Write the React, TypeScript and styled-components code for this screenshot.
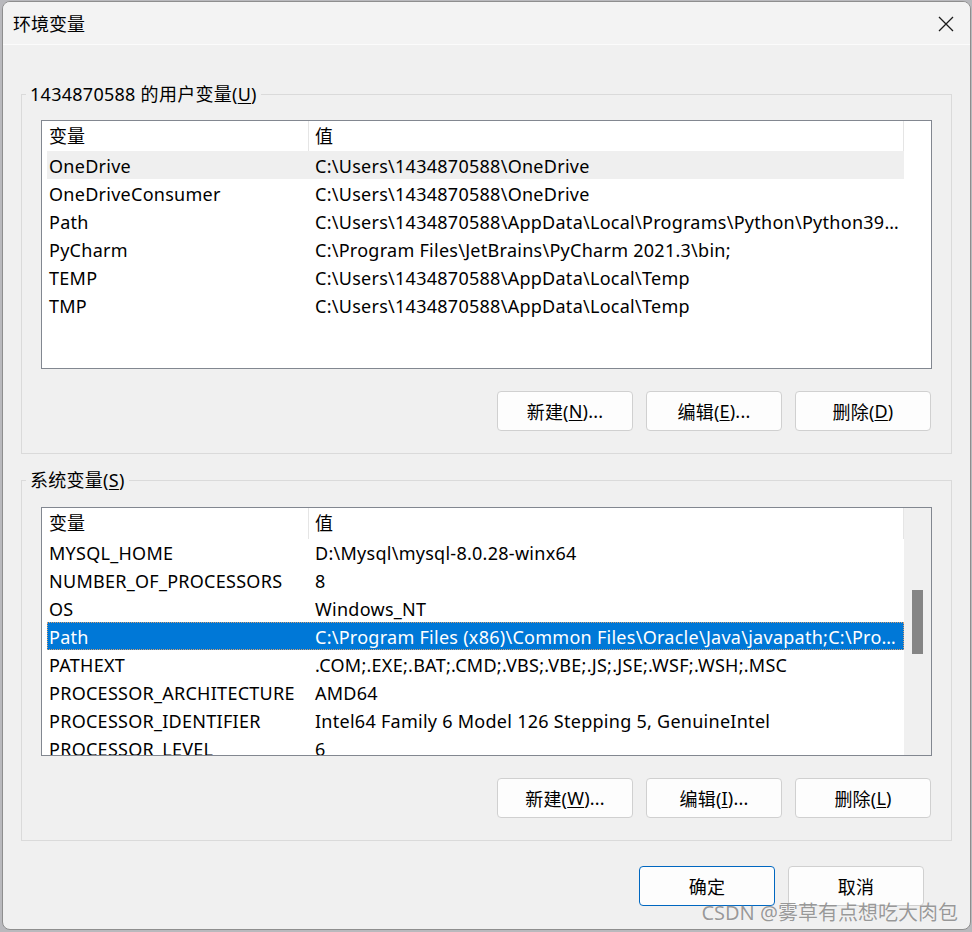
import React from 'react'
import styled, { createGlobalStyle } from 'styled-components'

const GlobalStyle = createGlobalStyle`
  html, body {
    margin: 0;
    padding: 0;
    background: #b9b9bd;
  }
  body {
    padding: 1px 0 0 2px;
    font-family: 'Noto Sans', 'Noto Sans CJK SC', sans-serif;
    color: #000;
  }
`

type Row = { name: string; value: string }

const userVars: Row[] = [
  { name: 'OneDrive', value: 'C:\\Users\\1434870588\\OneDrive' },
  { name: 'OneDriveConsumer', value: 'C:\\Users\\1434870588\\OneDrive' },
  { name: 'Path', value: 'C:\\Users\\1434870588\\AppData\\Local\\Programs\\Python\\Python39\\Scripts\\;C:\\Users' },
  { name: 'PyCharm', value: 'C:\\Program Files\\JetBrains\\PyCharm 2021.3\\bin;' },
  { name: 'TEMP', value: 'C:\\Users\\1434870588\\AppData\\Local\\Temp' },
  { name: 'TMP', value: 'C:\\Users\\1434870588\\AppData\\Local\\Temp' },
]

const sysVars: Row[] = [
  { name: 'MYSQL_HOME', value: 'D:\\Mysql\\mysql-8.0.28-winx64' },
  { name: 'NUMBER_OF_PROCESSORS', value: '8' },
  { name: 'OS', value: 'Windows_NT' },
  { name: 'Path', value: 'C:\\Program Files (x86)\\Common Files\\Oracle\\Java\\javapath;C:\\Program Files' },
  { name: 'PATHEXT', value: '.COM;.EXE;.BAT;.CMD;.VBS;.VBE;.JS;.JSE;.WSF;.WSH;.MSC' },
  { name: 'PROCESSOR_ARCHITECTURE', value: 'AMD64' },
  { name: 'PROCESSOR_IDENTIFIER', value: 'Intel64 Family 6 Model 126 Stepping 5, GenuineIntel' },
  { name: 'PROCESSOR_LEVEL', value: '6' },
]

const VarList = ({
  rows,
  hover,
  selected,
  scroll,
  top,
}: {
  rows: Row[]
  hover?: number
  selected?: number
  scroll?: boolean
  top: number
}) => (
  <ListView $top={top}>
    <Columns>
      <Header>
        <HeadCell $pad={7}>变量</HeadCell>
        <HeadSep />
        <HeadCell $pad={6}>值</HeadCell>
        <HeadSep />
      </Header>
      {rows.map((r, i) => (
        <ItemRow key={r.name + i} $hover={i === hover} $selected={i === selected}>
          <NameCell>{r.name}</NameCell>
          <ValueCell>{r.value}</ValueCell>
        </ItemRow>
      ))}
    </Columns>
    {scroll ? (
      <ScrollTrack>
        <ScrollThumb />
      </ScrollTrack>
    ) : (
      <Filler />
    )}
  </ListView>
)

const App = () => (
  <>
    <GlobalStyle />
    <Dialog>
      <TitleBar>
        <Title>环境变量</Title>
        <CloseButton>
          <svg width="16" height="16" viewBox="0 0 16 16">
            <path d="M1 1 L15 15 M15 1 L1 15" stroke="#1b1b1b" strokeWidth="1.3" fill="none" />
          </svg>
        </CloseButton>
      </TitleBar>
      <Body>
        <GroupBox $top={49}>
          <Caption>
            1434870588 的用户变量(<u>U</u>)
          </Caption>
          <VarList rows={userVars} hover={0} top={13} />
          <ButtonRow>
            <Button>
              新建(<u>N</u>)...
            </Button>
            <Button>
              编辑(<u>E</u>)...
            </Button>
            <Button>
              删除(<u>D</u>)
            </Button>
          </ButtonRow>
        </GroupBox>
        <GroupBox $top={26}>
          <Caption>
            系统变量(<u>S</u>)
          </Caption>
          <VarList rows={sysVars} selected={3} scroll top={14} />
          <ButtonRow>
            <Button>
              新建(<u>W</u>)...
            </Button>
            <Button>
              编辑(<u>I</u>)...
            </Button>
            <Button>
              删除(<u>L</u>)
            </Button>
          </ButtonRow>
        </GroupBox>
        <Footer>
          <Button $primary>确定</Button>
          <Button>取消</Button>
        </Footer>
      </Body>
      <Watermark>CSDN @雾草有点想吃大肉包</Watermark>
    </Dialog>
  </>
)

export default App

const Dialog = styled.div`
  position: relative;
  width: 967px;
  height: 927px;
  border: 1px solid #8e8e8e;
  border-radius: 8px;
  overflow: hidden;
  background: #f0f0f0;
  display: flex;
  flex-direction: column;
`

const TitleBar = styled.div`
  height: 42px;
  flex: 0 0 auto;
  background: #f3f3f3;
  border-bottom: 1px solid #fbfbfb;
  display: flex;
  align-items: center;
  justify-content: space-between;
  padding: 0 16px 0 10px;
`

const Title = styled.div`
  font-size: 18px;
  line-height: 24px;
  padding-top: 2px;
`

const CloseButton = styled.div`
  width: 16px;
  height: 16px;
  display: flex;
  margin-top: 1px;
`

const Body = styled.div`
  flex: 1;
  display: flex;
  flex-direction: column;
  padding-left: 18px;
`

const GroupBox = styled.div<{ $top: number }>`
  margin-top: ${(p) => p.$top}px;
  width: 931px;
  box-sizing: border-box;
  border: 1px solid #dadada;
  padding: 0 19px 22px 19px;
  display: flex;
  flex-direction: column;
`

const Caption = styled.div`
  align-self: flex-start;
  margin: -14px 0 0 -15px;
  padding: 0 4px;
  background: #f0f0f0;
  font-size: 18px;
  line-height: 26px;
  letter-spacing: 0.27px;
  white-space: nowrap;

  u {
    text-underline-offset: 2px;
  }
`

const ListView = styled.div<{ $top: number }>`
  margin-top: ${(p) => p.$top}px;
  height: 249px;
  flex: 0 0 auto;
  box-sizing: border-box;
  border: 1px solid #828790;
  background: #fff;
  display: flex;
  overflow: hidden;
`

const Columns = styled.div`
  width: 862px;
  display: flex;
  flex-direction: column;
`

const Header = styled.div`
  height: 30px;
  flex: 0 0 auto;
  display: grid;
  grid-template-columns: 266px 1px 594px 1px;
`

const HeadCell = styled.div<{ $pad: number }>`
  padding-left: ${(p) => p.$pad}px;
  font-size: 18px;
  line-height: 31px;
`

const HeadSep = styled.div`
  background: #e5e5e5;
`

const ItemRow = styled.div<{ $hover?: boolean; $selected?: boolean }>`
  flex: 0 0 auto;
  height: 28px;
  margin-left: 5px;
  width: 857px;
  box-sizing: border-box;
  display: grid;
  grid-template-columns: 261px 596px;
  font-size: 18px;
  line-height: 30px;
  letter-spacing: 0.27px;
  background: ${(p) => (p.$selected ? '#0078d7' : p.$hover ? '#efefef' : 'transparent')};
  color: ${(p) => (p.$selected ? '#fff' : '#000')};
  outline: ${(p) => (p.$selected ? '1px dotted #d8a070' : 'none')};
  outline-offset: -1px;
`

const NameCell = styled.div`
  padding-left: 2px;
  height: 28px;
  white-space: nowrap;
  overflow: hidden;
`

const ValueCell = styled.div`
  padding: 0 4px 0 7px;
  height: 28px;
  white-space: nowrap;
  overflow: hidden;
  text-overflow: ellipsis;
`

const Filler = styled.div`
  flex: 1;
`

const ScrollTrack = styled.div`
  flex: 1;
  background: #f0f0f0;
  padding: 82px 0 0 8px;
`

const ScrollThumb = styled.div`
  width: 11px;
  height: 64px;
  background: #858585;
`

const ButtonRow = styled.div`
  margin-top: 22px;
  display: flex;
  justify-content: flex-end;
  gap: 13px;
  padding-right: 1px;
`

const Button = styled.div<{ $primary?: boolean }>`
  width: 136px;
  height: 40px;
  box-sizing: border-box;
  border: 1px solid ${(p) => (p.$primary ? '#0067c0' : '#d0d0d0')};
  border-radius: 4px;
  background: #fdfdfd;
  display: flex;
  align-items: center;
  justify-content: center;
  font-size: 18px;
  letter-spacing: 0.2px;
  white-space: nowrap;

  u {
    text-underline-offset: 2px;
  }
`

const Footer = styled.div`
  margin-top: 25px;
  display: flex;
  justify-content: flex-end;
  gap: 13px;
  padding-right: 46px;
`

const Watermark = styled.div`
  position: absolute;
  right: 12px;
  bottom: 4px;
  font-size: 20px;
  line-height: 24px;
  color: rgba(120, 120, 120, 0.75);
  text-shadow: 0 0 1px rgba(255, 255, 255, 0.8);
  white-space: nowrap;
`
